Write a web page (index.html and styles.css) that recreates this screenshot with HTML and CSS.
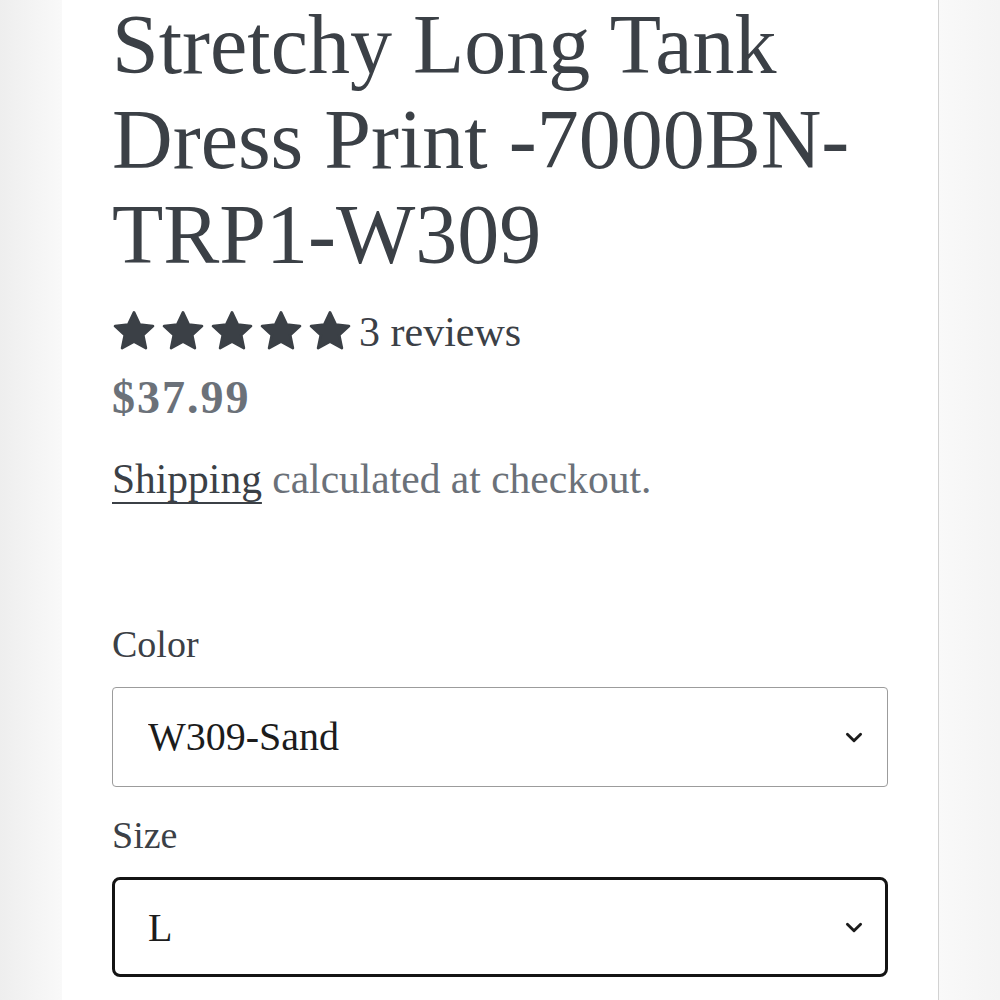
FILE: index.html
```html
<!DOCTYPE html>
<html lang="en">
<head>
  <meta charset="UTF-8" />
  <meta name="viewport" content="width=device-width, initial-scale=1.0" />
  <title>Stretchy Long Tank Dress Print</title>
  <link rel="stylesheet" href="styles.css">
</head>
<body>
  <div class="page">
    <div class="side side-left"></div>

    <!-- Product info column -->
    <main class="product">
      <h1 class="product-title">Stretchy Long Tank Dress Print -7000BN-TRP1-W309</h1>

      <div class="rating">
        <span class="stars">
          <svg class="star" viewBox="0 0 24 24"><path d="M12 1.8l3 6.3 6.9.8-5.1 4.7 1.4 6.8L12 17l-6.2 3.4 1.4-6.8-5.1-4.7 6.9-.8z"/></svg>
          <svg class="star" viewBox="0 0 24 24"><path d="M12 1.8l3 6.3 6.9.8-5.1 4.7 1.4 6.8L12 17l-6.2 3.4 1.4-6.8-5.1-4.7 6.9-.8z"/></svg>
          <svg class="star" viewBox="0 0 24 24"><path d="M12 1.8l3 6.3 6.9.8-5.1 4.7 1.4 6.8L12 17l-6.2 3.4 1.4-6.8-5.1-4.7 6.9-.8z"/></svg>
          <svg class="star" viewBox="0 0 24 24"><path d="M12 1.8l3 6.3 6.9.8-5.1 4.7 1.4 6.8L12 17l-6.2 3.4 1.4-6.8-5.1-4.7 6.9-.8z"/></svg>
          <svg class="star" viewBox="0 0 24 24"><path d="M12 1.8l3 6.3 6.9.8-5.1 4.7 1.4 6.8L12 17l-6.2 3.4 1.4-6.8-5.1-4.7 6.9-.8z"/></svg>
        </span>
        <span class="rating-count">3 reviews</span>
      </div>

      <p class="price">$37.99</p>
      <p class="tax-note"><a href="#">Shipping</a> calculated at checkout.</p>

      <!-- Variant pickers -->
      <div class="variant variant-first">
        <label class="variant-label" for="color">Color</label>
        <div class="select-wrap">
          <select id="color" class="variant-select">
            <option>W309-Sand</option>
          </select>
          <svg class="select-icon" viewBox="0 0 16 10"><path d="M2 2l6 6 6-6"/></svg>
        </div>
      </div>

      <div class="variant">
        <label class="variant-label" for="size">Size</label>
        <div class="select-wrap">
          <select id="size" class="variant-select is-active">
            <option>L</option>
          </select>
          <svg class="select-icon" viewBox="0 0 16 10"><path d="M2 2l6 6 6-6"/></svg>
        </div>
      </div>
    </main>

    <div class="side side-right"></div>
  </div>
</body>
</html>
```

FILE: styles.css
```css
/* Global Styles */
* {
  margin: 0;
  padding: 0;
  box-sizing: border-box;
}
body {
  font-family: 'Liberation Serif', 'Times New Roman', serif;
  color: #3b4046;
  background: #fff;
  overflow: hidden;
}
a {
  color: inherit;
}

/* Page frame */
.page {
  display: grid;
  grid-template-columns: 62px 1fr 61px;
  min-height: 1000px;
}
.side-left {
  background: linear-gradient(90deg, #eeeeee, #f9f9f9);
}
.side-right {
  background: linear-gradient(90deg, #f9f9f9, #f4f4f4);
}
.product {
  background: #fff;
  border-right: 1px solid #d2d2d2;
  padding: 0 50px;
}

/* Title */
.product-title {
  font-size: 84px;
  font-weight: 400;
  line-height: 95px;
  margin-top: -3px;
}

/* Rating */
.rating {
  display: flex;
  align-items: center;
  gap: 6px;
  margin-top: 26px;
  height: 48px;
}
.stars {
  display: flex;
  gap: 3px;
  margin-left: -1px;
}
.star {
  width: 46px;
  height: 46px;
  fill: #3b4046;
  stroke: #3b4046;
  stroke-width: 1.4;
  stroke-linejoin: round;
}
.rating-count {
  font-size: 42px;
  line-height: 48px;
}

/* Price */
.price {
  margin-top: 14px;
  font-size: 46px;
  font-weight: 700;
  line-height: 1.2;
  letter-spacing: 2px;
  color: #6b7179;
}
.tax-note {
  margin-top: 30px;
  font-size: 41.5px;
  line-height: 1.2;
  color: #6b7179;
}
.tax-note a {
  color: #3b4046;
  text-decoration: underline;
  text-decoration-thickness: 2px;
  text-underline-offset: 9px;
}

/* Variant selects */
.variant {
  margin-top: 26px;
}
.variant-first {
  margin-top: 117px;
}
.variant-label {
  display: block;
  font-size: 38px;
  line-height: 1.2;
  color: #3b4046;
  margin-bottom: 19px;
}
.select-wrap {
  position: relative;
}
.variant-select {
  display: block;
  width: 100%;
  height: 100px;
  padding: 0 80px 0 35px;
  font-family: inherit;
  font-size: 40px;
  color: #1c1c1c;
  background: #fff;
  border: 1px solid #9c9c9c;
  border-radius: 4px;
  appearance: none;
  -webkit-appearance: none;
  outline: none;
}
.variant-select.is-active {
  border: 3px solid #141414;
  border-radius: 8px;
  padding-left: 33px;
}
.select-icon {
  position: absolute;
  right: 25px;
  top: 50%;
  width: 18px;
  height: 11px;
  margin-top: -5px;
  fill: none;
  stroke: #1c1c1c;
  stroke-width: 2.6;
  stroke-linecap: round;
  stroke-linejoin: round;
  pointer-events: none;
}
```
